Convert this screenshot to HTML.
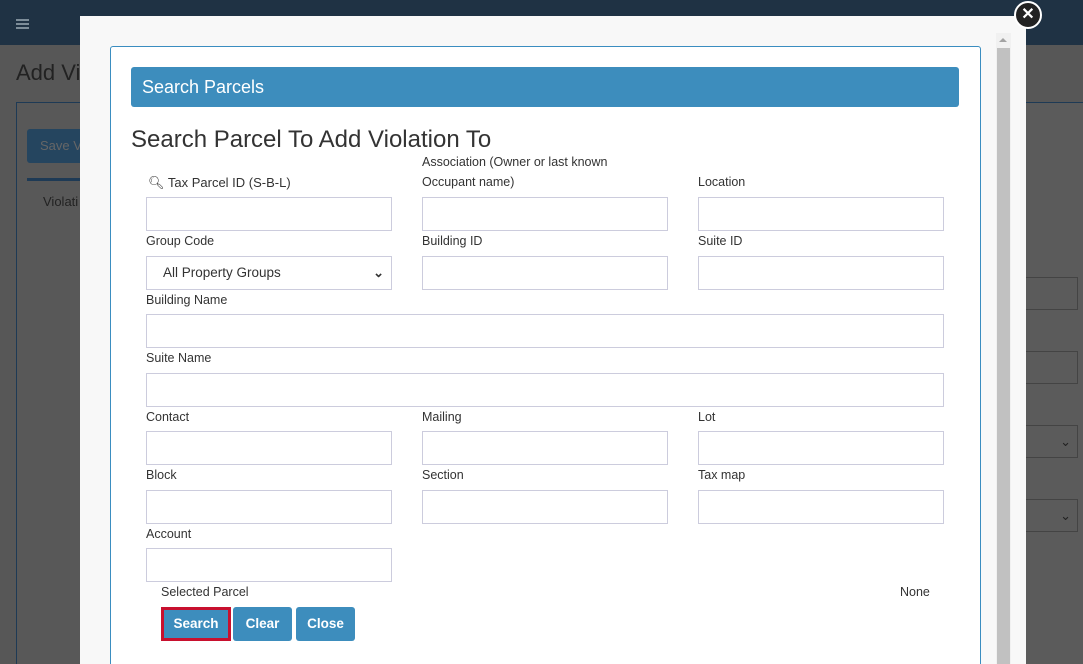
<!DOCTYPE html>
<html><head><meta charset="utf-8"><style>
*{box-sizing:border-box;margin:0;padding:0}
html,body{width:1083px;height:664px;overflow:hidden;background:#565656}
body{position:relative;font-family:"Liberation Sans",sans-serif;color:#333}
#wrap{position:absolute;left:0;top:0;width:1083px;height:664px;overflow:hidden;background:#575757}
.abs{position:absolute}
.lbl{position:absolute;font-size:12.5px;color:#333;white-space:nowrap}
.inp{position:absolute;height:34px;background:#fff;border:1px solid #ccd;}
.btn{position:absolute;top:607px;height:34px;background:#3d8dbd;color:#fff;font-weight:bold;font-size:13.5px;border-radius:3px;text-align:center;line-height:34px}
</style></head><body><div id="wrap">
<div class="abs" style="left:0;top:0;width:1083px;height:45px;background:#1f3244"></div>
<div class="abs" style="left:16px;top:19px;width:13px;height:2px;background:#7d8d99;box-shadow:0 4px 0 #7d8d99,0 8px 0 #7d8d99"></div>
<div class="abs" style="left:16px;top:60px;font-size:22px;color:#222">Add Vi</div>
<div class="abs" style="left:16px;top:102px;width:70px;height:562px;border-left:1px solid #1e3a55;border-top:1px solid #1e3a55;background:#585858"></div>
<div class="abs" style="left:27px;top:129px;width:60px;height:34px;background:#25455f;border-radius:3px;color:#666;font-size:13px;line-height:34px;padding-left:13px">Save V</div>
<div class="abs" style="left:27px;top:178px;width:60px;height:3px;background:#1e3a55"></div>
<div class="abs" style="left:43px;top:194px;font-size:13px;color:#222">Violati</div>
<div class="abs" style="left:1026px;top:102px;width:57px;height:562px;border-top:1px solid #1e3a55;background:#5b5b5b"></div>
<div class="abs" style="left:1026px;top:277px;width:52px;height:33px;border:1px solid #444;border-left:none"></div>
<div class="abs" style="left:1026px;top:351px;width:52px;height:33px;border:1px solid #444;border-left:none"></div>
<div class="abs" style="left:1026px;top:425px;width:52px;height:33px;border:1px solid #444;border-left:none;color:#222;font-size:13px;text-align:right;padding-right:6px;line-height:31px">⌄</div>
<div class="abs" style="left:1026px;top:499px;width:52px;height:33px;border:1px solid #444;border-left:none;color:#222;font-size:13px;text-align:right;padding-right:6px;line-height:31px">⌄</div>

<div class="abs" style="left:80px;top:16px;width:946px;height:648px;background:#f8f8f8"></div>
<div class="abs" style="left:996px;top:33px;width:15px;height:631px;background:#f1f1f1"></div>
<div class="abs" style="left:999px;top:38px;width:0;height:0;border-left:4px solid transparent;border-right:4px solid transparent;border-bottom:4px solid #a3a3a3"></div>
<div class="abs" style="left:997px;top:48px;width:13px;height:616px;background:#c1c1c1"></div>
<div class="abs" style="left:1014px;top:1px;width:28px;height:28px;border-radius:50%;background:#222;border:2px solid #fff;color:#fff;font-weight:bold;font-size:16px;text-align:center;line-height:24px">✕</div>

<div class="abs" style="left:110px;top:46px;width:871px;height:630px;background:#fff;border:1px solid #3a8dc0;border-radius:3px"></div>
<div class="abs" style="left:131px;top:67px;width:828px;height:40px;background:#3d8dbd;border-radius:3px;color:#fff;font-size:18px;line-height:40px;padding-left:11px">Search Parcels</div>
<div class="abs" style="left:131px;top:126px;font-size:24px;color:#333">Search Parcel To Add Violation To</div>

<div class="lbl" style="left:148px;top:175px;font-size:13px">🔍︎ Tax Parcel ID (S-B-L)</div>
<div class="lbl" style="left:422px;top:155px">Association (Owner or last known</div>
<div class="lbl" style="left:422px;top:175px">Occupant name)</div>
<div class="lbl" style="left:698px;top:175px">Location</div>
<div class="inp" style="left:146px;top:197px;width:246px"></div>
<div class="inp" style="left:422px;top:197px;width:246px"></div>
<div class="inp" style="left:698px;top:197px;width:246px"></div>

<div class="lbl" style="left:146px;top:234px">Group Code</div>
<div class="lbl" style="left:422px;top:234px">Building ID</div>
<div class="lbl" style="left:698px;top:234px">Suite ID</div>
<div class="inp" style="left:146px;top:256px;width:246px;font-size:13.5px;line-height:32px;padding-left:16px">All Property Groups<span style="position:absolute;right:7px;top:0;font-size:13px;font-weight:bold">⌄</span></div>
<div class="inp" style="left:422px;top:256px;width:246px"></div>
<div class="inp" style="left:698px;top:256px;width:246px"></div>

<div class="lbl" style="left:146px;top:293px">Building Name</div>
<div class="inp" style="left:146px;top:314px;width:798px"></div>
<div class="lbl" style="left:146px;top:351px">Suite Name</div>
<div class="inp" style="left:146px;top:373px;width:798px"></div>

<div class="lbl" style="left:146px;top:410px">Contact</div>
<div class="lbl" style="left:422px;top:410px">Mailing</div>
<div class="lbl" style="left:698px;top:410px">Lot</div>
<div class="inp" style="left:146px;top:431px;width:246px"></div>
<div class="inp" style="left:422px;top:431px;width:246px"></div>
<div class="inp" style="left:698px;top:431px;width:246px"></div>

<div class="lbl" style="left:146px;top:468px">Block</div>
<div class="lbl" style="left:422px;top:468px">Section</div>
<div class="lbl" style="left:698px;top:468px">Tax map</div>
<div class="inp" style="left:146px;top:490px;width:246px"></div>
<div class="inp" style="left:422px;top:490px;width:246px"></div>
<div class="inp" style="left:698px;top:490px;width:246px"></div>

<div class="lbl" style="left:146px;top:527px">Account</div>
<div class="inp" style="left:146px;top:548px;width:246px"></div>

<div class="lbl" style="left:161px;top:585px">Selected Parcel</div>
<div class="lbl" style="left:900px;top:585px">None</div>

<div class="btn" style="left:161px;width:70px;border:3px solid #c8102e;border-radius:0;line-height:28px">Search</div>
<div class="btn" style="left:233px;width:59px">Clear</div>
<div class="btn" style="left:296px;width:59px">Close</div>
</div></body></html>
